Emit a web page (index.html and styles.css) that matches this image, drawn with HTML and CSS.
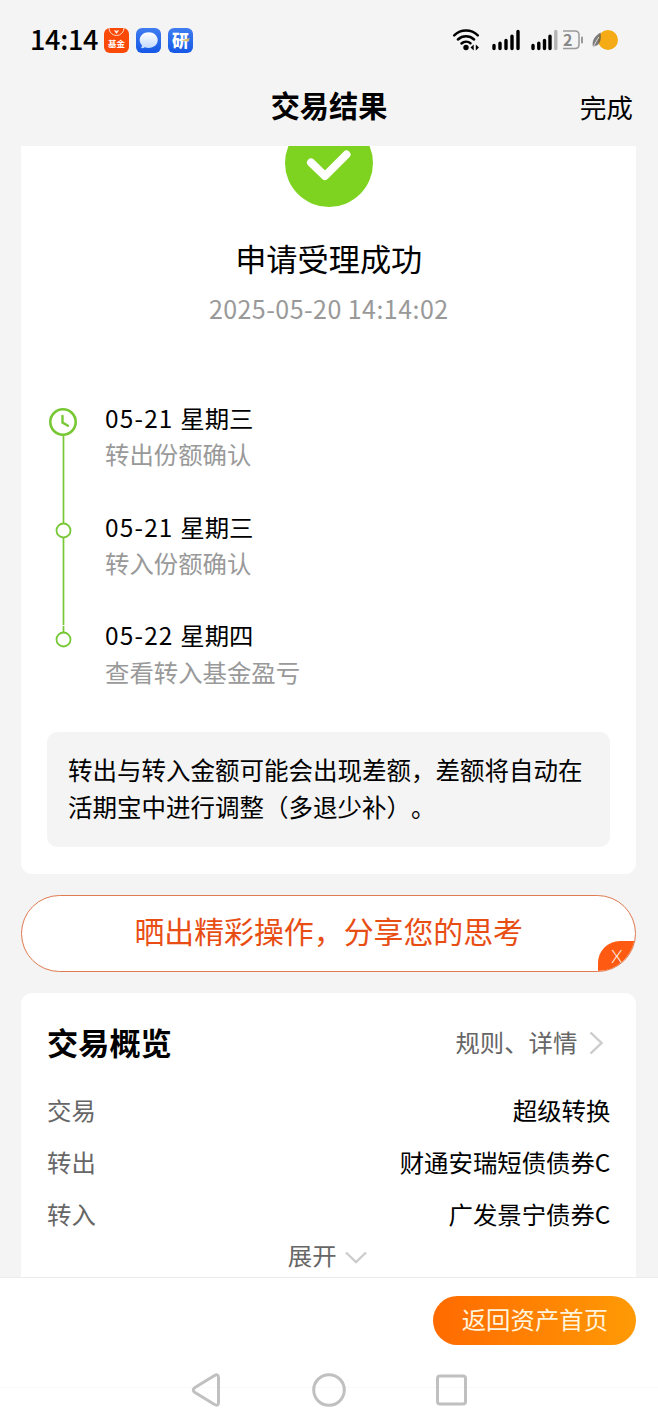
FILE: index.html
```html
<!DOCTYPE html>
<html lang="zh-CN">
<head>
<meta charset="utf-8">
<title>交易结果</title>
<link rel="stylesheet" href="styles.css">
</head>

<body>
<div class="statusbar">
  <div class="status-left">
    <span class="clock">14:14</span>
    <svg class="app" width="25" height="25" viewBox="0 0 25 25">
      <rect width="25" height="25" rx="6" fill="#fb4a08"/>
      <path d="M5 0a7.5 7.5 0 0 0 15 0" fill="none" stroke="#ffd9c8" stroke-width="1"/>
      <path d="M10.500 2.500l2 3 2-3-2 .7z" fill="#fff" stroke="#fff" stroke-width=".6"/>
      <text class="fund-text" x="12.5" y="19.3">基金</text>
    </svg>
    <svg class="app" width="25" height="25" viewBox="0 0 25 25">
      <defs>
        <linearGradient id="blue" x1="0" y1="0" x2="0" y2="1">
          <stop offset="0" stop-color="#3f7df0"/><stop offset="1" stop-color="#1558e6"/>
        </linearGradient>
        <linearGradient id="bubble" x1="0" y1="0" x2="0" y2="1">
          <stop offset="0" stop-color="#fff"/><stop offset="1" stop-color="#c3daff"/>
        </linearGradient>
      </defs>
      <rect width="25" height="25" rx="6" fill="url(#blue)"/>
      <path d="M12.7 4.2c5.2 0 9 3.3 9 7.9s-3.8 7.9-9 7.9c-1.4 0-2.7-.2-3.8-.7-1.2.8-2.5 1-3.9.8.7-.8 1-1.8.9-2.9-1.4-1.4-2.2-3.1-2.2-5.1 0-4.6 3.8-7.9 9-7.9z" fill="url(#bubble)"/>
    </svg>
    <svg class="app" width="25" height="25" viewBox="0 0 25 25">
      <rect width="25" height="25" rx="6" fill="url(#blue)"/>
      <text class="yan-text" x="12.5" y="18.6">研</text>
      <path d="M13 12.5l9-2.5-2 3.5z" fill="#d9bd62"/>
    </svg>
  </div>
  <div class="status-right">
    <svg width="30" height="24" viewBox="0 0 30 24">
      <g fill="none" stroke="#000" stroke-width="2.5" stroke-linecap="round">
        <path d="M2.2 7.3a17 17 0 0 1 23.6 0"/>
        <path d="M5.9 11.5a12 12 0 0 1 16.2 0"/>
        <path d="M9.5 15.5a7 7 0 0 1 9-.3"/>
      </g>
      <circle cx="14" cy="19.5" r="2.7"/>
      <path d="M18.5 19.5l3.2-3v6zM27 19.5l-3.2-3v6z"/>
    </svg>
    <svg width="28" height="24" viewBox="0 0 28 24">
      <path class="bar" d="M2 20.5v-3M8 20.5v-5.2M14 20.5v-8M20 20.5v-12.2M26 20.5V3.5"/>
    </svg>
    <svg width="28" height="24" viewBox="0 0 28 24">
      <path class="bar" d="M3 20.5v-3M8.8 20.5v-5.2M14.5 20.5v-8M20 20.5v-12.2"/>
      <path class="bar off" d="M25.8 20.5V3.5"/>
    </svg>
    <svg class="battery" width="22" height="24" viewBox="0 0 22 24">
      <path d="M0 3h12q4 0 4 4v9.5q0 4-4 4H0" fill="none" stroke="#999" stroke-width="1.5"/>
      <path d="M19 9.5v5" stroke="#999" stroke-width="2" stroke-linecap="round"/>
      <text class="level" x="0" y="17.5">2</text>
    </svg>
    <svg class="leaf" width="28" height="24" viewBox="0 0 28 24">
      <circle cx="17" cy="12" r="10" fill="#f5ab16"/>
      <path d="M2 19C.5 12 4 8 9.5 4.5 10.5 11 9.5 17 4 18z" fill="#555" fill-opacity=".75"/>
      <path d="M2.2 19.5C4 15 6 12 8 9" fill="none" stroke="#ddd" stroke-width="1"/>
    </svg>
  </div>
</div>

<header class="header">
  <h1>交易结果</h1>
  <a class="done">完成</a>
</header>

<main class="page">
  <section class="card result">
    <!-- success badge, scrolled partly under the header -->
    <svg class="badge" width="88" height="61" viewBox="0 27 88 61">
      <circle cx="44" cy="44" r="44" fill="#7ed321"/>
      <path d="M26 43.5L40 57 61.5 35.5" fill="none" stroke="#fff" stroke-width="8" stroke-linecap="round" stroke-linejoin="round"/>
    </svg>
    <h2 class="result-title">申请受理成功</h2>
    <div class="result-time">2025-05-20 14:14:02</div>

    <div class="timeline">
      <svg class="rail" width="30" height="245" viewBox="0 0 30 245">
        <g fill="none" stroke="#78c835">
          <path d="M15.5 28v190M15.5 219v7" stroke-width="1.7"/>
          <circle cx="15" cy="15" r="12.7" stroke-width="2.6"/>
          <path d="M14.5 9v6.5l5.5 3.2" stroke-width="2.4" stroke-linecap="round"/>
          <circle cx="15.5" cy="123.5" r="7" stroke-width="1.8" fill="#fff"/>
          <circle cx="15.5" cy="232.5" r="7" stroke-width="1.8" fill="#fff"/>
        </g>
      </svg>
      <ul class="steps">
        <li><b><span class="num">05-21 </span>星期三</b><span>转出份额确认</span></li>
        <li><b><span class="num">05-21 </span>星期三</b><span>转入份额确认</span></li>
        <li><b><span class="num">05-22 </span>星期四</b><span>查看转入基金盈亏</span></li>
      </ul>
    </div>

    <p class="note">转出与转入金额可能会出现差额，差额将自动在活期宝中进行调整（多退少补）。</p>
  </section>

  <div class="share">
    晒出精彩操作，分享您的思考
    <span class="share-close">X</span>
  </div>

  <section class="card overview">
    <div class="overview-head">
      <h2>交易概览</h2>
      <a class="rules">规则、详情
        <svg width="14" height="24" viewBox="0 0 14 24"><path d="M1.5 2.5L12.5 13 1.5 23.5" fill="none" stroke="#ccc" stroke-width="2.4"/></svg>
      </a>
    </div>
    <dl class="rows">
      <div><dt>交易</dt><dd>超级转换</dd></div>
      <div><dt>转出</dt><dd>财通安瑞短债债券C</dd></div>
      <div><dt>转入</dt><dd>广发景宁债券C</dd></div>
    </dl>
    <div class="expand">展开
      <svg width="22" height="13" viewBox="0 0 22 13"><path d="M1 1.5L11 11 21 1.5" fill="none" stroke="#ccc" stroke-width="2.4"/></svg>
    </div>
  </section>
</main>

<footer class="footer">
  <button class="home-btn">返回资产首页</button>
</footer>

<nav class="navbar">
  <svg width="32" height="36" viewBox="0 0 32 36"><path d="M24.5 3.5Q28.5 1.5 28.5 5.5v25q0 4-4 2L5 20.5q-3.5-2.500 0-5z"/></svg>
  <svg width="34" height="36" viewBox="0 0 34 36"><circle cx="17" cy="18" r="15.3"/></svg>
  <svg width="32" height="36" viewBox="0 0 32 36"><rect x="1.5" y="4" width="28" height="28" rx="2.5"/></svg>
</nav>
</body>
</html>
```

FILE: styles.css
```css
* { box-sizing: border-box; margin: 0; padding: 0; }

body {
  width: 658px;
  height: 1416px;
  display: flex;
  flex-direction: column;
  overflow: hidden;
  background: #f4f4f4;
  color: #000;
  font-family: "Noto Sans CJK SC", sans-serif;
  font-size: 24.4px;
  text-spacing-trim: space-all;
}

svg { display: block; flex: none; }

/* status bar */
.statusbar {
  height: 80px;
  padding: 0 39px 0 30px;
  display: flex;
  align-items: center;
  justify-content: space-between;
}
.status-left, .status-right { display: flex; align-items: center; }
.clock { font-size: 27px; font-weight: 500; line-height: 40px; width: 74px; letter-spacing: -0.3px; margin-top: -3px; }
.app { margin-right: 6.8px; }
.fund-text { font-size: 8.5px; font-weight: 700; fill: #fff; text-anchor: middle; }
.yan-text { font-size: 17px; font-weight: 900; fill: #fff; text-anchor: middle; }
.status-right { gap: 10px; }
.bar { fill: none; stroke: #000; stroke-width: 3.4; stroke-linecap: round; }
.bar.off { stroke: #b5b5b5; }
.battery { margin-left: -5px; }
.level { font-size: 16px; font-weight: 700; fill: #888; }
.leaf { margin-left: -4px; }

/* title bar */
.header {
  height: 66px;
  padding: 0 25px;
  display: grid;
  grid-template-columns: 1fr auto 1fr;
  align-items: start;
}
.header h1 { grid-column: 2; font-size: 29.2px; line-height: 49px; font-weight: 700; }
.done { justify-self: end; font-size: 26.7px; line-height: 53px; }

/* cards */
.page { height: 1131px; padding: 0 21.6px 0 21px; overflow: hidden; }
.card { background: #fff; border-radius: 11px; padding: 0 26px; }

.result { height: 728px; border-top-left-radius: 0; border-top-right-radius: 0; }
.badge { margin: 0 auto; }
.result-title { margin-top: 28px; text-align: center; font-size: 31.2px; line-height: 46px; font-weight: 400; }
.result-time { margin-top: 9px; text-align: center; color: #999; font-size: 25px; line-height: 36px; letter-spacing: 0.45px; }

.timeline { display: flex; margin-top: 74px; }
.rail { margin: 7px 0 0 1px; }
.steps { list-style: none; margin-left: 27px; }
.steps li { height: 108.7px; line-height: 36.4px; }
.steps b { display: block; font-weight: 400; white-space: pre; }
.steps li > span { color: #999; }
.num { letter-spacing: 1.2px; }

.note {
  margin-top: 6px;
  height: 115px;
  padding: 20px 20px 0 21px;
  font-size: 24.5px;
  line-height: 36.5px;
  background: #f4f4f4;
  border-radius: 10px;
}

/* share pill */
.share {
  position: relative;
  height: 77px;
  margin: 21px 0;
  border: 1px solid #e07a50;
  border-radius: 39px;
  overflow: hidden;
  background: #fff;
  color: #e84e14;
  font-size: 29.9px;
  line-height: 68px;
  text-align: center;
}
.share-close {
  position: absolute;
  right: 0;
  bottom: 0;
  width: 37px;
  height: 30px;
  border-top-left-radius: 22px;
  background: #ff5a12;
  color: #fff;
  font-family: Lato, sans-serif;
  font-weight: 300;
  font-size: 18px;
  line-height: 30px;
}

/* overview */
.overview { height: 300px; padding-top: 24px; }
.overview-head { display: flex; justify-content: space-between; align-items: center; height: 50px; }
.overview-head h2 { font-size: 31.2px; line-height: 46px; }
.rules { display: flex; align-items: center; gap: 12px; margin-right: 7px; color: #666; line-height: 34px; padding-bottom: 1px; }
.rows { margin-top: 17px; }
.rows div { display: flex; justify-content: space-between; height: 52.2px; line-height: 52px; }
.rows dt { color: #666; }
.expand { display: flex; align-items: center; justify-content: center; gap: 8px; height: 36px; margin-top: -4px; padding-right: 3px; color: #666; }
.expand svg { margin-top: 5px; }

/* bottom */
.footer {
  height: 87px;
  padding: 18px 21.6px 0;
  display: flex;
  justify-content: flex-end;
  border-top: 1px solid #ececec;
  background: #fff;
}
.home-btn {
  width: 203px;
  height: 49px;
  padding-bottom: 4px;
  border: 0;
  border-radius: 25px;
  background: linear-gradient(90deg, #ff6a00, #ff9a05);
  color: #fff3dc;
  font: 24.4px/44px "Noto Sans CJK SC", sans-serif;
}
.navbar {
  height: 52px;
  display: flex;
  justify-content: center;
  align-items: center;
  gap: 90px;
  background: #fff linear-gradient(#f9f9f9, #f9f9f9) 0 23px / 100% 1px no-repeat;
}
.navbar svg { fill: none; stroke: #c0c0c0; stroke-width: 3; }
```
